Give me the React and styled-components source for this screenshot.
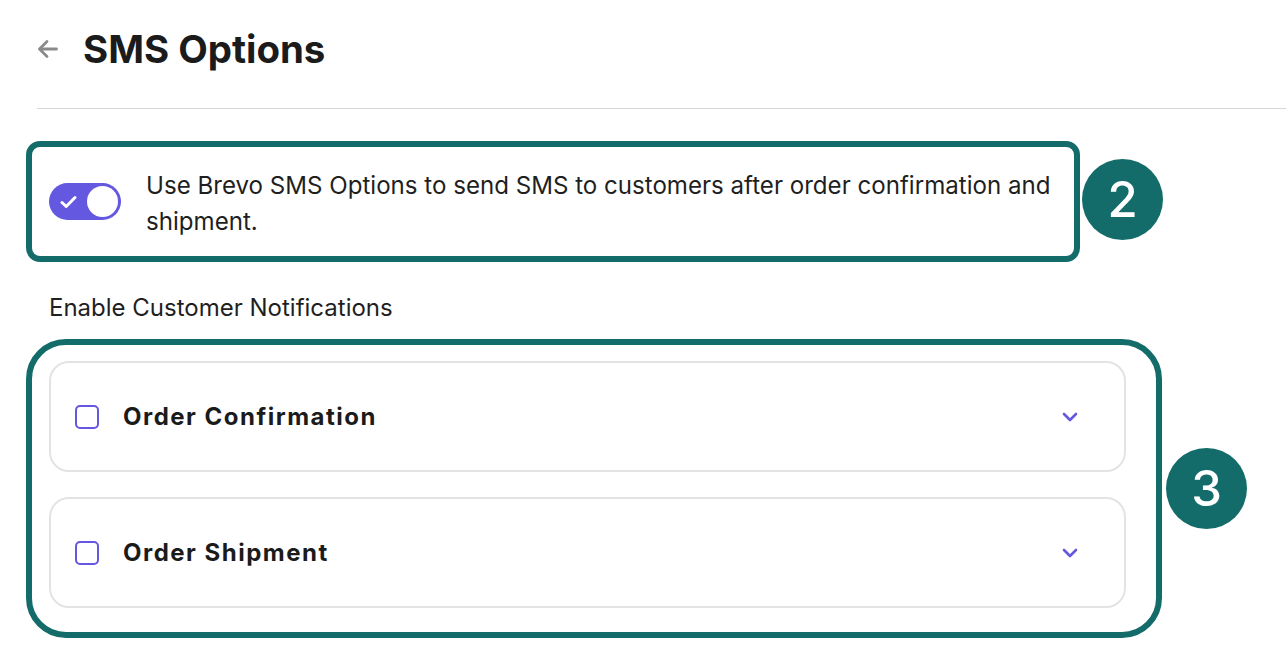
import React from "react";
import styled, { createGlobalStyle } from "styled-components";

const GlobalStyle = createGlobalStyle`
  html, body {
    margin: 0;
    padding: 0;
    background: #ffffff;
  }
  body {
    font-family: Inter, "Noto Sans", "Liberation Sans", sans-serif;
    color: #1f1f1f;
    -webkit-font-smoothing: antialiased;
  }
`;

const TEAL = "#136c6a";
const PURPLE = "#6457e0";

const Page = styled.div`
  width: 1286px;
  height: 662px;
  overflow: hidden;
  padding-left: 26px;
  box-sizing: border-box;
`;

const Header = styled.header`
  display: flex;
  align-items: center;
  gap: 24px;
  height: 98px;
  padding-left: 11px;
  box-sizing: border-box;
`;

const BackButton = styled.button`
  display: flex;
  align-items: center;
  justify-content: center;
  width: 22px;
  height: 22px;
  padding: 0;
  border: 0;
  background: none;
  color: #8a8a8a;
  cursor: pointer;
`;

const Title = styled.h1`
  margin: 0;
  font-size: 38.4px;
  font-weight: 700;
  line-height: 1;
  color: #1b1b1b;
`;

const Divider = styled.hr`
  margin: 10px 0 0 11px;
  border: 0;
  border-top: 1px solid #d6d6d6;
`;

const AnnotatedRow = styled.div`
  display: flex;
  align-items: center;
  gap: ${(p) => p.$gap}px;
  margin-top: ${(p) => p.$top}px;
`;

const Highlight = styled.div`
  box-sizing: border-box;
  width: ${(p) => p.$width}px;
  border: 6px solid ${TEAL};
  border-radius: ${(p) => p.$radius}px;
  background: #fff;
`;

const Badge = styled.div`
  flex: none;
  width: 81px;
  height: 81px;
  border-radius: 50%;
  background: ${TEAL};
  color: #fff;
  display: flex;
  align-items: center;
  justify-content: center;
  font-size: 49px;
  font-weight: 500;
  margin-top: ${(p) => p.$shift || 0}px;
`;

const ToggleRow = styled.div`
  display: flex;
  align-items: center;
  gap: 25px;
  min-height: 109px;
  padding: 0 20px 0 17px;
`;

const Switch = styled.div`
  flex: none;
  position: relative;
  width: 72px;
  height: 37px;
  border-radius: 19px;
  background: ${PURPLE};
  display: flex;
  align-items: center;
  padding-left: 11px;
  box-sizing: border-box;
`;

const Thumb = styled.span`
  position: absolute;
  right: 3px;
  top: 3px;
  width: 31px;
  height: 31px;
  border-radius: 50%;
  background: #fff;
`;

const ToggleText = styled.p`
  margin: 0;
  font-size: 24.1px;
  line-height: 36px;
  color: #1f1f1f;
  padding-top: 4px;
`;

const SectionLabel = styled.div`
  margin: 31px 0 0 23px;
  font-size: 24px;
  line-height: 30px;
  color: #1f1f1f;
`;

const CardList = styled.div`
  display: flex;
  flex-direction: column;
  gap: 25px;
  padding: 16px 30px 24px 17px;
`;

const Card = styled.div`
  box-sizing: border-box;
  height: 111px;
  border: 2px solid #e3e3e3;
  border-radius: 20px;
  display: flex;
  align-items: center;
  padding: 0 46px 0 24px;
`;

const Checkbox = styled.span`
  flex: none;
  box-sizing: border-box;
  width: 24px;
  height: 24px;
  border: 2px solid ${PURPLE};
  border-radius: 5px;
`;

const CardTitle = styled.span`
  margin-left: 24px;
  font-size: 24px;
  font-weight: 700;
  letter-spacing: 1.5px;
  color: #1b1b1b;
  flex: 1;
`;

const Chevron = styled.svg`
  flex: none;
  color: ${PURPLE};
`;

const ArrowLeft = () => (
  <svg width="22" height="22" viewBox="0 0 22 22" fill="none" stroke="currentColor" strokeWidth="2.8" strokeLinecap="round" strokeLinejoin="round">
    <path d="M19.5 11H3" />
    <path d="M10 3.5L2.5 11 10 18.5" />
  </svg>
);

const Check = () => (
  <svg width="17" height="14" viewBox="0 0 17 14" fill="none" stroke="#fff" strokeWidth="3" strokeLinecap="round" strokeLinejoin="round">
    <path d="M2 7.5l4.2 4L15 2.5" />
  </svg>
);

const notifications = ["Order Confirmation", "Order Shipment"];

export default function App() {
  return (
    <>
      <GlobalStyle />
      <Page>
        <Header>
          <BackButton aria-label="Back">
            <ArrowLeft />
          </BackButton>
          <Title>SMS Options</Title>
        </Header>
        <Divider />

        <AnnotatedRow $gap={2} $top={32}>
          <Highlight $width={1054} $radius={14}>
            <ToggleRow>
              <Switch role="switch" aria-checked="true">
                <Check />
                <Thumb />
              </Switch>
              <ToggleText>
                Use Brevo SMS Options to send SMS to customers after order confirmation and shipment.
              </ToggleText>
            </ToggleRow>
          </Highlight>
          <Badge $shift={-4}>2</Badge>
        </AnnotatedRow>

        <SectionLabel>Enable Customer Notifications</SectionLabel>

        <AnnotatedRow $gap={4} $top={16}>
          <Highlight $width={1136} $radius={40}>
            <CardList>
              {notifications.map((name) => (
                <Card key={name}>
                  <Checkbox role="checkbox" aria-checked="false" />
                  <CardTitle>{name}</CardTitle>
                  <Chevron width="16" height="10" viewBox="0 0 16 10" fill="none" stroke="currentColor" strokeWidth="2.6" strokeLinecap="round" strokeLinejoin="round">
                    <path d="M2 2l6 6 6-6" />
                  </Chevron>
                </Card>
              ))}
            </CardList>
          </Highlight>
          <Badge>3</Badge>
        </AnnotatedRow>
      </Page>
    </>
  );
}
